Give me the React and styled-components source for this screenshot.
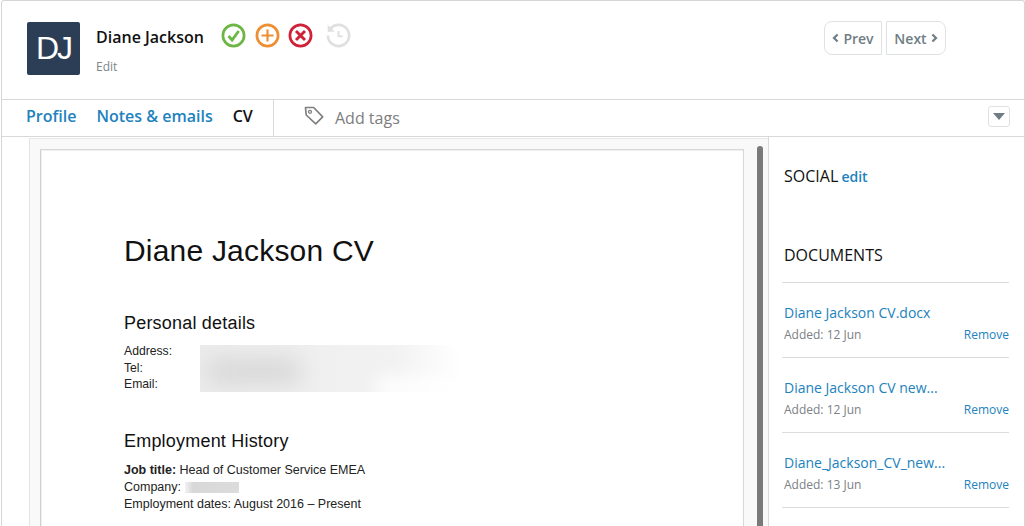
import React from "react";
import styled, { createGlobalStyle } from "styled-components";

const GlobalStyle = createGlobalStyle`
  html, body {
    margin: 0;
    padding: 0;
    background: #fff;
    overflow: hidden;
  }
  body {
    font-family: "Open Sans", sans-serif;
  }
`;

const Frame = styled.div`
  width: 1024px;
  height: 526px;
  margin-left: 1px;
  box-sizing: border-box;
  border: 1px solid #d6d6d6;
  border-bottom: none;
  border-radius: 3px 3px 0 0;
  overflow: hidden;
  display: flex;
  flex-direction: column;
`;

const Header = styled.header`
  height: 99px;
  box-sizing: border-box;
  flex: none;
  display: flex;
  padding: 21px 78px 0 25px;
  border-bottom: 1px solid #d9d9d9;
`;

const Avatar = styled.div`
  width: 53px;
  height: 53px;
  border-radius: 2px;
  background: #2b3e55;
  color: #fff;
  font-family: "Liberation Sans", Arial, sans-serif;
  font-size: 32px;
  letter-spacing: -2px;
  display: flex;
  align-items: center;
  justify-content: center;
`;

const NameBlock = styled.div`
  margin-left: 16px;
  width: 125px;
`;

const Name = styled.div`
  font-size: 16px;
  font-weight: 600;
  line-height: 22px;
  margin-top: 4px;
  color: #111;
  white-space: nowrap;
`;

const EditLink = styled.div`
  font-size: 12px;
  line-height: 16px;
  margin-top: 11px;
  color: #7b858b;
`;

const Actions = styled.div`
  display: flex;
  gap: 8.5px;
  height: 26px;
  margin-top: 1px;
`;

const ActionIcon = styled.svg`
  width: 25px;
  height: 25px;
  margin-right: ${(p) => p.$gap || 0}px;
`;

const Pager = styled.div`
  margin: -1px 0 0 auto;
  display: flex;
  gap: 4px;
  height: 34px;
`;

const PagerButton = styled.div`
  box-sizing: border-box;
  height: 34px;
  width: ${(p) => p.$width}px;
  border: 1px solid #dfe2e3;
  border-radius: ${(p) => (p.$side === "left" ? "8px 0 0 8px" : "0 8px 8px 0")};
  color: #6f7d84;
  font-size: 14px;
  font-weight: 600;
  display: flex;
  align-items: center;
  justify-content: center;
  gap: 4px;
`;

const Chevron = styled.svg`
  width: 7px;
  height: 10px;
`;

const TabBar = styled.nav`
  height: 37px;
  box-sizing: border-box;
  flex: none;
  display: flex;
  border-bottom: 1px solid #d9d9d9;
`;

const Tabs = styled.div`
  width: 247px;
  padding: 0 0 4px 24px;
  display: flex;
  align-items: center;
  gap: 20px;
  border-right: 1px solid #d9d9d9;
`;

const Tab = styled.a`
  font-size: 16px;
  font-weight: 600;
  color: ${(p) => (p.$active ? "#111" : "#2182bd")};
  white-space: nowrap;
`;

const TagField = styled.div`
  flex: 1;
  display: flex;
  align-items: center;
  padding-left: 30px;
  padding-right: 14px;
  color: #7d7d7d;
  font-size: 16px;
`;

const TagIcon = styled.svg`
  width: 22px;
  height: 22px;
  margin-right: 9px;
  margin-top: -4px;
`;

const Dropdown = styled.div`
  margin: -3px 0 0 auto;
  width: 22px;
  height: 21px;
  box-sizing: border-box;
  border: 1px solid #dfe2e3;
  border-radius: 3px;
  display: flex;
  align-items: center;
  justify-content: center;
  &::before {
    content: "";
    border-left: 6px solid transparent;
    border-right: 6px solid transparent;
    border-top: 7px solid #6f7d84;
  }
`;

const Body = styled.div`
  flex: 1;
  display: flex;
  min-height: 0;
`;

const Viewer = styled.main`
  width: 739px;
  margin: 1px 0 0 27px;
  box-sizing: border-box;
  flex: none;
  border-left: 1px solid #e3e3e3;
  border-top: 1px solid #e8e8e8;
  background: #f9f9f9;
  display: flex;
  padding: 10px 0 0 10px;
`;

const Page = styled.article`
  box-sizing: border-box;
  width: 704px;
  height: 500px;
  flex: none;
  background: #fff;
  border: 1px solid #d8d8d8;
  border-left-color: #d0d0d0;
  box-shadow: inset 1px 1px 0 #f0f0f0;
  padding: 81px 0 0 83px;
  color: #111;
  font-family: "Liberation Sans", Arial, sans-serif;
`;

const Scrollbar = styled.div`
  width: 6px;
  height: 400px;
  border-radius: 3px 3px 0 0;
  background: #7a7a7a;
  margin: -3px 0 0 13px;
`;

const DocTitle = styled.h1`
  margin: 0;
  font-size: 30px;
  font-weight: 400;
  line-height: 40px;
  letter-spacing: 0.2px;
`;

const DocHeading = styled.h2`
  margin: ${(p) => p.$top}px 0 0;
  font-size: 18px;
  font-weight: 400;
  line-height: 24px;
  letter-spacing: 0.2px;
`;

const DetailsGrid = styled.div`
  display: grid;
  grid-template-columns: 76px 260px;
  margin-top: 8px;
`;

const DocLines = styled.div`
  font-size: 12.2px;
  line-height: 16.5px;
  color: #222;
`;

const JobLines = styled(DocLines)`
  font-size: 12.5px;
  line-height: 17px;
  margin-top: 9px;
`;

const Redacted = styled.div`
  height: 47px;
  margin-top: 2px;
  overflow: hidden;
  position: relative;
  background: linear-gradient(90deg, #ececec 0%, #f2f2f2 75%, #fff 100%);
  &::before {
    content: "";
    position: absolute;
    left: 8px;
    top: 13px;
    width: 92px;
    height: 26px;
    background: #d8d8d8;
    filter: blur(11px);
  }
  &::after {
    content: "";
    position: absolute;
    right: -6px;
    bottom: -6px;
    width: 90px;
    height: 20px;
    background: #fff;
    filter: blur(9px);
  }
`;

const RedactedWord = styled.span`
  display: inline-block;
  width: 54px;
  height: 11px;
  vertical-align: -2px;
  margin-left: 1px;
  background: linear-gradient(90deg, #f2f2f2, #d8d8d8 15%, #dcdcdc);
`;

const Sidebar = styled.aside`
  flex: 1;
  box-sizing: border-box;
  border-left: 1px solid #d9d9d9;
  padding: 28px 15px 0 13px;
`;

const SectionTitle = styled.div`
  font-size: 16px;
  line-height: 22px;
  color: #111;
  padding-left: 2px;
`;

const SmallEdit = styled.span`
  font-size: 14px;
  font-weight: 600;
  color: #2182bd;
  margin-left: -1px;
`;

const DocumentsTitle = styled(SectionTitle)`
  margin-top: 56px;
  padding-bottom: 16px;
  border-bottom: 1px solid #dcdcdc;
`;

const DocumentItem = styled.div`
  height: 54px;
  border-bottom: 1px solid #dcdcdc;
  padding: 20px 0 0 2px;
`;

const DocumentName = styled.a`
  display: block;
  font-size: 14px;
  line-height: 20px;
  color: #2182bd;
`;

const DocumentMeta = styled.div`
  display: flex;
  justify-content: space-between;
  margin-top: 3px;
  font-size: 12px;
  line-height: 18px;
  color: #7b8186;
`;

const RemoveLink = styled.a`
  color: #2182bd;
`;

const documents = [
  { name: "Diane Jackson CV.docx", added: "12 Jun" },
  { name: "Diane Jackson CV new...", added: "12 Jun" },
  { name: "Diane_Jackson_CV_new...", added: "13 Jun" },
];

const Circle = ({ color, children, gap }) => (
  <ActionIcon viewBox="0 0 25 25" fill="none" $gap={gap}>
    <circle cx="12.5" cy="12.5" r="10.6" stroke={color} strokeWidth="2.7" />
    {children}
  </ActionIcon>
);

export default function App() {
  return (
    <>
      <GlobalStyle />
      <Frame>
        <Header>
          <Avatar>DJ</Avatar>
          <NameBlock>
            <Name>Diane Jackson</Name>
            <EditLink>Edit</EditLink>
          </NameBlock>
          <Actions>
            <Circle color="#6cb743">
              <path d="M7.5 13l3.6 4 6.6-9" stroke="#6cb743" strokeWidth="2.8" />
            </Circle>
            <Circle color="#ee8f34">
              <path d="M12.5 6.5v12M6.5 12.5h12" stroke="#ee8f34" strokeWidth="2.2" />
            </Circle>
            <Circle color="#cf2137" gap={4}>
              <path d="M8 8l9 9M17 8l-9 9" stroke="#cf2137" strokeWidth="2.9" />
            </Circle>
            <ActionIcon viewBox="0 0 25 25" fill="none">
              <path
                d="M4.6 5.4A10.6 10.6 0 1 1 1.9 12.5"
                stroke="#e0e0e0"
                strokeWidth="2.7"
              />
              <path d="M1.6 1.8l.2 7.2 7-.6z" fill="#e0e0e0" />
              <path d="M12.5 8v5.2h4" stroke="#e0e0e0" strokeWidth="2" />
            </ActionIcon>
          </Actions>
          <Pager>
            <PagerButton $side="left" $width={58}>
              <Chevron viewBox="0 0 7 10" fill="none">
                <path d="M5.6 1.5L2 5l3.6 3.5" stroke="#6f7d84" strokeWidth="2.2" />
              </Chevron>
              Prev
            </PagerButton>
            <PagerButton $side="right" $width={60}>
              Next
              <Chevron viewBox="0 0 7 10" fill="none">
                <path d="M1.4 1.5L5 5 1.4 8.5" stroke="#6f7d84" strokeWidth="2.2" />
              </Chevron>
            </PagerButton>
          </Pager>
        </Header>
        <TabBar>
          <Tabs>
            <Tab>Profile</Tab>
            <Tab>Notes &amp; emails</Tab>
            <Tab $active>CV</Tab>
          </Tabs>
          <TagField>
            <TagIcon viewBox="0 0 22 22" fill="none">
              <path
                d="M1.5 2.5h8.2l9 9.4-7 7L2.2 10z"
                stroke="#808080"
                strokeWidth="1.7"
                strokeLinejoin="round"
              />
              <circle cx="6" cy="6.8" r="1.5" stroke="#808080" strokeWidth="1.3" />
            </TagIcon>
            Add tags
            <Dropdown />
          </TagField>
        </TabBar>
        <Body>
          <Viewer>
            <Page>
              <DocTitle>Diane Jackson CV</DocTitle>
              <DocHeading $top={40}>Personal details</DocHeading>
              <DetailsGrid>
                <DocLines>
                  Address:
                  <br />
                  Tel:
                  <br />
                  Email:
                </DocLines>
                <Redacted />
              </DetailsGrid>
              <DocHeading $top={36}>Employment History</DocHeading>
              <JobLines>
                <b>Job title:</b> Head of Customer Service EMEA
                <br />
                Company: <RedactedWord />
                <br />
                Employment dates: August 2016 – Present
              </JobLines>
            </Page>
            <Scrollbar />
          </Viewer>
          <Sidebar>
            <SectionTitle>
              SOCIAL <SmallEdit>edit</SmallEdit>
            </SectionTitle>
            <DocumentsTitle>DOCUMENTS</DocumentsTitle>
            {documents.map((doc) => (
              <DocumentItem key={doc.name}>
                <DocumentName>{doc.name}</DocumentName>
                <DocumentMeta>
                  <span>Added: {doc.added}</span>
                  <RemoveLink>Remove</RemoveLink>
                </DocumentMeta>
              </DocumentItem>
            ))}
          </Sidebar>
        </Body>
      </Frame>
    </>
  );
}
